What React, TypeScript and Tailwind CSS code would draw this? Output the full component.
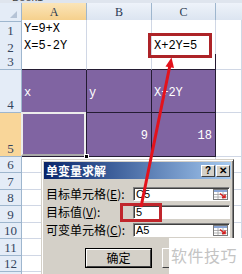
import React from "react"

const cols = "grid grid-cols-[22px_65px_65px_64px_1fr]"
const cell = "border-r border-b border-[#d0d7e5] bg-white"
const purple = "border-r border-b border-[#241c33] bg-[#8064a2] text-white"
const serif = "font-[family-name:'Liberation_Serif',serif]"

function Row({ n, h, sel, children }: { n: string; h: string; sel?: boolean; children?: React.ReactNode }) {
  return (
    <div className={`${cols} ${h}`}>
      <div
        className={`flex items-end justify-center border-r border-b border-[#9eb6ce] ${serif} text-[13px] leading-[15px] text-[#34455e] ${
          sel ? "bg-[#f9d699]" : "bg-[#e4ecf7]"
        }`}
      >
        {n}
      </div>
      {children}
    </div>
  )
}

function Blank({ n, h }: { n: string; h: string }) {
  return (
    <Row n={n} h={h}>
      <div className={cell} />
      <div className={cell} />
      <div className={cell} />
      <div className={cell} />
    </Row>
  )
}

function RefIcon() {
  return (
    <svg width="15" height="11" viewBox="0 0 15 11" className="shrink-0">
      <rect x="0.5" y="0.5" width="14" height="10" fill="#ffffff" stroke="#7a7a7a" />
      <rect x="1" y="1" width="13" height="2" fill="#8aa6d6" />
      <path d="M1 5.5H14M1 8H14M5 3V10M10 3V10" stroke="#a0a0a0" strokeWidth="0.8" />
      <path d="M7 4.5L12 8.5M12 5.5V8.5H9" stroke="#d42020" strokeWidth="1.6" fill="none" />
    </svg>
  )
}

function Field({ label, k, value, refBtn }: { label: string; k: string; value: string; refBtn?: boolean }) {
  return (
    <div className="flex h-[14px] items-center">
      <div className="w-[87px] shrink-0 whitespace-nowrap text-[12px] leading-[14px] text-black">
        {label}(<span className="underline">{k}</span>):
      </div>
      <div className="flex h-[14px] w-[97px] items-center justify-between border border-[#808080] border-r-white border-b-white bg-white pl-[2px] pr-[1px] shadow-[inset_1px_1px_0_#404040]">
        <span className="font-[family-name:'Liberation_Sans',sans-serif] text-[11px] leading-[12px] text-black">{value}</span>
        {refBtn && <RefIcon />}
      </div>
    </div>
  )
}

function TitleBtn({ children }: { children: React.ReactNode }) {
  return (
    <div className="flex h-[12px] w-[14px] items-center justify-center border border-white border-r-[#404040] border-b-[#404040] bg-[#d4d0c8] font-[family-name:'Liberation_Sans',sans-serif] text-[10px] font-bold leading-none text-black">
      {children}
    </div>
  )
}

export default function App() {
  return (
    <div className="relative h-[274px] w-[242px] overflow-hidden bg-white font-[family-name:'Noto_Sans_CJK_SC',sans-serif]">
      <div className="flex h-[3px] items-end overflow-hidden bg-[#dfe5ee] pl-[12px]">
        <span className="font-[family-name:'Liberation_Sans',sans-serif] text-[11px] leading-[11px] text-[#404040]">Book1</span>
      </div>

      <div className={`${cols} h-[17px]`}>
        <div className="relative border-r border-b border-[#9eb6ce] bg-[#e4ecf7]">
          <div className="absolute right-[4px] bottom-[3px] h-0 w-0 border-t-[7px] border-r-[7px] border-t-transparent border-r-[#b5c3d6]" />
        </div>
        <div className={`flex items-center justify-center border-r border-b border-[#9eb6ce] bg-gradient-to-b from-[#fbe5b8] to-[#f5cf8a] ${serif} text-[12px] text-[#2b3a52]`}>
          A
        </div>
        <div className={`flex items-center justify-center border-r border-b border-[#9eb6ce] bg-gradient-to-b from-[#eef3fa] to-[#dbe4f0] ${serif} text-[12px] text-[#2b3a52]`}>
          B
        </div>
        <div className={`flex items-center justify-center border-r border-b border-[#9eb6ce] bg-gradient-to-b from-[#eef3fa] to-[#dbe4f0] ${serif} text-[12px] text-[#2b3a52]`}>
          C
        </div>
        <div className="border-b border-[#9eb6ce] bg-gradient-to-b from-[#eef3fa] to-[#dbe4f0]" />
      </div>

      <div className="font-[family-name:'Liberation_Mono',monospace] text-[12px] text-black">
        <Row n="1" h="h-[17px]">
          <div className={`${cell} flex items-center pl-[2px]`}>Y=9+X</div>
          <div className={cell} />
          <div className={cell} />
          <div className={cell} />
        </Row>
        <Row n="2" h="h-[17px]">
          <div className={`${cell} flex items-center pl-[2px]`}>X=5-2Y</div>
          <div className={cell} />
          <div className={`${cell} flex items-center pl-[2px]`}>X+2Y=5</div>
          <div className={cell} />
        </Row>
        <Row n="3" h="h-[16px]">
          <div className={`${cell} border-b-[#241c33]`} />
          <div className={`${cell} border-b-[#241c33]`} />
          <div className={`${cell} border-r-[#241c33] border-b-[#241c33]`} />
          <div className={cell} />
        </Row>
        <Row n="4" h="h-[43px]">
          <div className={`${purple} flex items-center pt-[4px] pl-[2px]`}>x</div>
          <div className={`${purple} flex items-center pt-[4px] pl-[2px]`}>y</div>
          <div className={`${purple} flex items-center pt-[4px] pl-[2px]`}>X+2Y</div>
          <div className={cell} />
        </Row>
        <Row n="5" h="h-[44px]" sel>
          <div className={`${purple} relative`}>
            <div className="absolute -top-px -left-px right-0 bottom-0 border-2 border-[#ececec] border-b-[#a8a8a8]" />
            <div className="absolute -right-[3px] -bottom-[3px] h-[5px] w-[5px] border border-white bg-black" />
          </div>
          <div className={`${purple} flex items-center justify-end pt-[3px] pr-[3px]`}>9</div>
          <div className={`${purple} flex items-center justify-end pt-[3px] pr-[3px]`}>18</div>
          <div className={cell} />
        </Row>
        <Blank n="6" h="h-[16px]" />
        <Blank n="7" h="h-[17px]" />
        <Blank n="8" h="h-[16px]" />
        <Blank n="9" h="h-[17px]" />
        <Blank n="10" h="h-[16px]" />
        <Blank n="11" h="h-[17px]" />
        <Blank n="12" h="h-[16px]" />
        <Blank n="" h="h-[17px]" />
      </div>

      {/* dialog window */}
      <div className="absolute top-[159px] left-[41px] flex h-[130px] w-[193px] flex-col border border-[#d4d0c8] border-r-[#404040] border-b-[#404040] bg-[#d4d0c8] p-[2px] shadow-[inset_1px_1px_0_#ffffff,inset_-1px_-1px_0_#808080]">
        <div className="flex h-[17px] shrink-0 items-center justify-between bg-gradient-to-r from-[#0a246a] to-[#a6caf0] pr-[1px] pl-[2px]">
          <span className="text-[12px] font-bold leading-none text-white">单变量求解</span>
          <div className="flex gap-[1px]">
            <TitleBtn>?</TitleBtn>
            <TitleBtn>✕</TitleBtn>
          </div>
        </div>
        <div className="flex flex-col gap-[4px] pt-[8px] pl-[2px]">
          <Field label="目标单元格" k="E" value="C5" refBtn />
          <Field label="目标值" k="V" value="5" />
          <Field label="可变单元格" k="C" value="A5" refBtn />
        </div>
        <div className="mt-[11px] flex justify-end gap-[10px] pr-[2px]">
          <div className="h-[20px] w-[67px] border border-black">
            <div className="flex h-full w-full items-center justify-center border border-white border-r-[#404040] border-b-[#404040] text-[12px] text-black">
              确定
            </div>
          </div>
          <div className="h-[20px] w-[67px] border border-white border-r-[#404040] border-b-[#404040]" />
        </div>
      </div>

      {/* highlight boxes */}
      <div className="absolute top-[33px] left-[148px] h-[25px] w-[64px] border-[3px] border-[#ad2328]" />
      <div className="absolute top-[203px] left-[120px] h-[19px] w-[42px] border-[3px] border-[#c0262c]" />

      <svg className="pointer-events-none absolute inset-0" width="242" height="274" viewBox="0 0 242 274">
        <line x1="141" y1="207" x2="169.8" y2="66" stroke="#e3121c" strokeWidth="3" />
        <polygon points="171.5,57.5 174,68 165.5,66.5" fill="#e3121c" />
      </svg>

      {/* watermark */}
      <div className="absolute top-[238px] left-[169px] flex h-[36px] w-[73px] items-start bg-white pt-[8px] pl-[2px]">
        <span className="text-[16px] leading-[18px] tracking-[0.5px] text-[#c4c4c4]">软件技巧</span>
      </div>
    </div>
  )
}
